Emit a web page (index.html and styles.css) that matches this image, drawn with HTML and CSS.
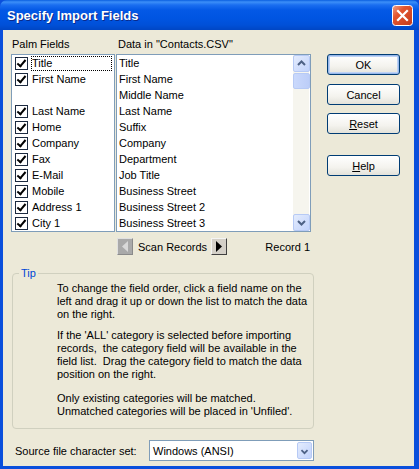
FILE: index.html
```html
<!DOCTYPE html>
<html>
<head>
<meta charset="utf-8">
<link rel="stylesheet" href="styles.css">
</head>
<body>
<div class="window">
  <div class="titlebar">
    <span class="title">Specify Import Fields</span>
    <div class="close">
      <svg width="21" height="21" viewBox="0 0 21 21">
        <defs>
          <linearGradient id="cg" x1="0" y1="0" x2="1" y2="1">
            <stop offset="0" stop-color="#F0A38A"/>
            <stop offset="0.35" stop-color="#E2552F"/>
            <stop offset="1" stop-color="#C43A1A"/>
          </linearGradient>
        </defs>
        <rect x="0.5" y="0.5" width="20" height="20" rx="3" fill="url(#cg)" stroke="#ffffff"/>
        <path d="M6 6 L15 15 M15 6 L6 15" stroke="#ffffff" stroke-width="2.2" stroke-linecap="square"/>
      </svg>
    </div>
  </div>
  <div class="client">
    <div class="main">
      <div class="leftcol">
        <div class="labels">
          <span class="lbl-palm">Palm Fields</span>
          <span class="lbl-data">Data in "Contacts.CSV"</span>
        </div>
        <div class="lists">
          <div class="list palm">
            <div class="row focus"><span class="cb"></span><span class="txt">Title</span></div>
            <div class="row"><span class="cb"></span><span class="txt">First Name</span></div>
            <div class="row"></div>
            <div class="row"><span class="cb"></span><span class="txt">Last Name</span></div>
            <div class="row"><span class="cb"></span><span class="txt">Home</span></div>
            <div class="row"><span class="cb"></span><span class="txt">Company</span></div>
            <div class="row"><span class="cb"></span><span class="txt">Fax</span></div>
            <div class="row"><span class="cb"></span><span class="txt">E-Mail</span></div>
            <div class="row"><span class="cb"></span><span class="txt">Mobile</span></div>
            <div class="row"><span class="cb"></span><span class="txt">Address 1</span></div>
            <div class="row"><span class="cb"></span><span class="txt">City 1</span></div>
          </div>
          <div class="list data">
            <div class="items">
              <div class="drow">Title</div>
              <div class="drow">First Name</div>
              <div class="drow">Middle Name</div>
              <div class="drow">Last Name</div>
              <div class="drow">Suffix</div>
              <div class="drow">Company</div>
              <div class="drow">Department</div>
              <div class="drow">Job Title</div>
              <div class="drow">Business Street</div>
              <div class="drow">Business Street 2</div>
              <div class="drow">Business Street 3</div>
            </div>
            <div class="scrollbar">
              <div class="sbtn"><svg width="15" height="15" viewBox="0 0 15 15"><path d="M4 9 L7.5 5.5 L11 9" fill="none" stroke="#4D6185" stroke-width="2"/></svg></div>
              <div class="thumb"></div>
              <div class="track"></div>
              <div class="sbtn"><svg width="15" height="15" viewBox="0 0 15 15"><path d="M4 6 L7.5 9.5 L11 6" fill="none" stroke="#4D6185" stroke-width="2"/></svg></div>
            </div>
          </div>
        </div>
        <div class="scan">
          <div class="arrowbtn disabled"><svg width="8" height="11" viewBox="0 0 8 11"><path d="M7 0 L1 5.5 L7 11 Z" fill="#D8D8D8"/></svg></div>
          <span class="scantxt">Scan Records</span>
          <div class="arrowbtn"><svg width="8" height="11" viewBox="0 0 8 11"><path d="M1 0 L7 5.5 L1 11 Z" fill="#000"/></svg></div>
          <span class="record">Record 1</span>
        </div>
      </div>
      <div class="buttons">
        <div class="btn default">OK</div>
        <div class="btn b-cancel">Cancel</div>
        <div class="btn b-reset"><u>R</u>eset</div>
        <div class="btn b-help"><u>H</u>elp</div>
      </div>
    </div>
    <div class="tip">
      <span class="legend">Tip</span>
      <p class="p1">To change the field order, click a field name on the<br>left and drag it up or down the list to match the data<br>on the right.</p>
      <p class="p2">If the 'ALL' category is selected before importing<br>records,&nbsp; the category field will be available in the<br>field list.&nbsp; Drag the category field to match the data<br>position on the right.</p>
      <p class="p3">Only existing categories will be matched.<br>Unmatched categories will be placed in 'Unfiled'.</p>
    </div>
    <div class="charset">
      <span class="cslabel">Source file character set:</span>
      <div class="select">
        <span class="seltxt">Windows (ANSI)</span>
        <div class="dropbtn"><svg width="15" height="17" viewBox="0 0 15 17"><path d="M4 7 L7.5 10.5 L11 7" fill="none" stroke="#4D6185" stroke-width="2"/></svg></div>
      </div>
    </div>
  </div>
</div>
</body>
</html>
```
FILE: styles.css
```css
html, body {
  margin: 0;
  padding: 0;
  background: #ffffff;
}
.window {
  width: 419px;
  height: 469px;
  box-sizing: border-box;
  display: flex;
  flex-direction: column;
  background: #0A4FDC;
  font-family: "Liberation Sans", Arial, sans-serif;
  font-size: 11px;
  color: #000;
  overflow: hidden;
}
.titlebar {
  height: 30px;
  flex: none;
  display: flex;
  align-items: center;
  justify-content: space-between;
  padding: 0 6px 0 7px;
  background: linear-gradient(to bottom, #0A5FE0 0px, #3C8FF8 2px, #1A6EF0 5px, #0459E6 10px, #0055E2 18px, #0050D8 25px, #0046C4 30px);
  border-radius: 7px 7px 0 0;
}
.title {
  color: #fff;
  font-weight: bold;
  font-size: 13px;
  font-family: "Liberation Sans", Arial, sans-serif;
  text-shadow: 1px 1px 0 #0A2A8A;
  padding-top: 1px;
}
.close {
  width: 21px;
  height: 21px;
  display: flex;
  margin-top: 1px;
}
.client {
  flex: 1;
  margin: 0 5px 3px 3px;
  background: #ECE9D8;
  padding: 7px 0 0 8px;
  display: flex;
  flex-direction: column;
}
.main {
  display: flex;
}
.leftcol {
  width: 300px;
  display: flex;
  flex-direction: column;
}
.labels {
  height: 14px;
  line-height: 14px;
  margin-bottom: 3px;
  display: flex;
}
.lbl-palm {
  width: 106px;
  padding-left: 1px;
}
.lists {
  display: flex;
  gap: 1px;
}
.list {
  background: #fff;
  border: 1px solid #7F9DB9;
  height: 176px;
}
.palm {
  width: 102px;
}
.row {
  height: 16px;
  display: flex;
  align-items: center;
  padding-left: 3px;
}
.cb {
  width: 11px;
  height: 11px;
  border: 1px solid #1C2A40;
  background: #fff;
  box-sizing: content-box;
  position: relative;
  flex: none;
}
.cb::after {
  content: "";
  position: absolute;
  left: 3px;
  top: 0px;
  width: 3px;
  height: 7px;
  border-right: 2px solid #000;
  border-bottom: 2px solid #000;
  transform: rotate(40deg);
  transform-origin: 50% 50%;
}
.txt {
  margin-left: 3px;
  height: 15px;
  line-height: 15px;
  padding: 0 1px;
}
.focus .txt {
  flex: 1;
  margin-right: 2px;
  outline: 1px dotted #000;
  outline-offset: -1px;
}
.data {
  width: 193px;
  display: flex;
}
.items {
  flex: 1;
  padding-left: 2px;
}
.drow {
  height: 16px;
  line-height: 16px;
  white-space: nowrap;
}
.scrollbar {
  width: 16px;
  margin: 0 1px 0 0;
  display: flex;
  flex-direction: column;
  background: #F6F5EE;
}
.sbtn {
  height: 15px;
  width: 15px;
  border: 1px solid #B7CAF5;
  border-radius: 2px;
  background: linear-gradient(to bottom right, #E4ECFD, #C2D3FC);
  display: flex;
}
.thumb {
  height: 14px;
  width: 15px;
  margin-top: 1px;
  border: 1px solid #B7CAF5;
  border-radius: 2px;
  background: linear-gradient(to right, #CAD9FC, #BCCDF8);
}
.track {
  flex: 1;
}
.scan {
  margin-top: 6px;
  height: 17px;
  display: flex;
  align-items: center;
  padding-left: 106px;
}
.arrowbtn {
  width: 14px;
  height: 15px;
  border: 1px solid;
  border-color: #F4F4F4 #404040 #404040 #F4F4F4;
  background: #D4D0C8;
  display: flex;
  align-items: center;
  justify-content: center;
}
.arrowbtn.disabled {
  background: #A9A9A9;
  border-color: #E0E0E0 #8A8A8A #8A8A8A #E0E0E0;
}
.scantxt {
  width: 78px;
  padding-left: 5px;
  box-sizing: border-box;
}
.record {
  flex: 1;
  text-align: right;
  padding-right: 1px;
}
.buttons {
  margin-left: 16px;
  margin-top: 17px;
  display: flex;
  flex-direction: column;
}
.btn {
  width: 73px;
  height: 21px;
  box-sizing: border-box;
  border: 1px solid #003C74;
  border-radius: 3px;
  background: linear-gradient(to bottom, #FFFFFF 0%, #F4F3EE 60%, #E3E2DA 100%);
  display: flex;
  align-items: center;
  justify-content: center;
}
.btn.default {
  box-shadow: inset 0 0 0 1px #98B8EA, inset 0 0 0 2px #BDD2F5;
}
.b-cancel { margin-top: 9px; }
.b-reset { margin-top: 8px; }
.b-help { margin-top: 21px; }
.btn u { text-decoration: underline; }
.tip {
  position: relative;
  margin-top: 18px;
  margin-left: 1px;
  width: 302px;
  height: 156px;
  box-sizing: border-box;
  border: 1px solid #D0D0BF;
  border-radius: 4px;
  padding: 8px 0 0 44px;
}
.legend {
  position: absolute;
  left: 6px;
  top: -8px;
  padding: 0 2px;
  background: #ECE9D8;
  color: #0046D5;
  line-height: 14px;
}
.tip p {
  margin: 0;
  line-height: 13px;
  white-space: nowrap;
}
.tip .p2 { margin-top: 8px; }
.tip .p3 { margin-top: 11px; }
.charset {
  margin-top: 11px;
  display: flex;
  align-items: center;
}
.cslabel {
  width: 138px;
  padding-left: 4px;
  box-sizing: border-box;
}
.select {
  width: 165px;
  height: 21px;
  box-sizing: border-box;
  border: 1px solid #7F9DB9;
  background: #fff;
  display: flex;
  align-items: center;
  justify-content: space-between;
  padding: 1px 1px 1px 3px;
}
.dropbtn {
  width: 15px;
  height: 17px;
  border: 1px solid #B7CAF5;
  border-radius: 2px;
  box-sizing: border-box;
  background: linear-gradient(to bottom right, #E4ECFD, #C2D3FC);
  display: flex;
}
```
